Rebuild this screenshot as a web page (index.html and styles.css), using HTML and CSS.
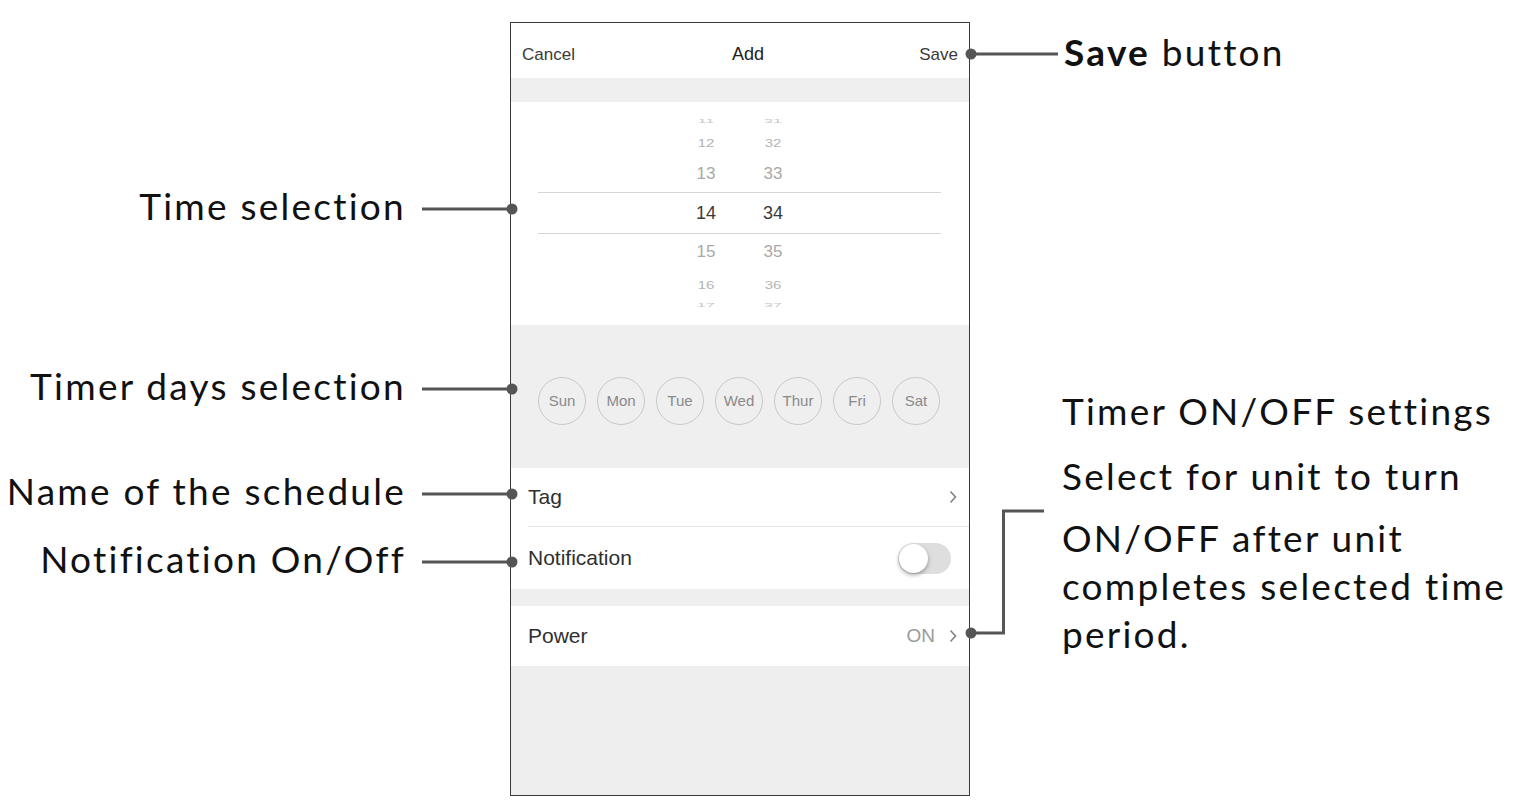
FILE: index.html
```html
<!DOCTYPE html>
<html lang="en">
<head>
  <meta charset="UTF-8" />
  <meta name="viewport" content="width=device-width, initial-scale=1" />
  <title>Timer schedule - Add</title>
  <link rel="stylesheet" href="styles.css">
</head>
<body>
  <div class="stage">
    <div class="phone">
      <div class="nav">
        <span>Cancel</span>
        <span class="nav-title">Add</span>
        <span>Save</span>
      </div>
      <div class="band"></div>

      <div class="picker">
        <div class="pick-row edge"><span>11</span><span>31</span></div>
        <div class="pick-row far"><span>12</span><span>32</span></div>
        <div class="pick-row near"><span>13</span><span>33</span></div>
        <div class="pick-row current"><span>14</span><span>34</span></div>
        <div class="pick-row near"><span>15</span><span>35</span></div>
        <div class="pick-row far"><span>16</span><span>36</span></div>
        <div class="pick-row edge"><span>17</span><span>37</span></div>
      </div>

      <div class="days">
        <span class="day">Sun</span>
        <span class="day">Mon</span>
        <span class="day">Tue</span>
        <span class="day">Wed</span>
        <span class="day">Thur</span>
        <span class="day">Fri</span>
        <span class="day">Sat</span>
      </div>

      <div class="group">
        <div class="row row-tag">
          <span>Tag</span>
          <svg class="chevron" viewBox="0 0 8 14"><polyline points="1.5,1.5 6.5,7 1.5,12.5" /></svg>
        </div>
        <div class="row row-notify">
          <span>Notification</span>
          <span class="toggle"></span>
        </div>
      </div>
      <div class="band band-small"></div>
      <div class="group">
        <div class="row row-power">
          <span>Power</span>
          <span class="row-value">ON
            <svg class="chevron" viewBox="0 0 8 14"><polyline points="1.5,1.5 6.5,7 1.5,12.5" /></svg>
          </span>
        </div>
      </div>
      <div class="fill"></div>
    </div>

    <!-- callout leaders -->
    <svg class="leaders" width="1524" height="811" viewBox="0 0 1524 811">
      <g fill="none" stroke="#555" stroke-width="3">
        <path d="M971 54 H1058" />
        <path d="M422 209 H512" />
        <path d="M422 389 H512" />
        <path d="M422 494 H512" />
        <path d="M422 562 H512" />
        <path d="M971 633 H1003.5 V511 H1044" />
      </g>
      <g fill="#555">
        <circle cx="971" cy="54" r="5.5" />
        <circle cx="512" cy="209" r="5.5" />
        <circle cx="512" cy="389" r="5.5" />
        <circle cx="512" cy="494" r="5.5" />
        <circle cx="512" cy="562" r="5.5" />
        <circle cx="971" cy="633" r="5.5" />
      </g>
    </svg>

    <p class="label label-left lbl-time">Time selection</p>
    <p class="label label-left lbl-days">Timer days selection</p>
    <p class="label label-left lbl-name">Name of the schedule</p>
    <p class="label label-left lbl-notify">Notification On/Off</p>

    <p class="label lbl-save"><b>Save</b> button</p>

    <div class="label note">
      <p>Timer ON/OFF settings</p>
      <p class="note-sub">Select for unit to turn</p>
      <p class="note-body">ON/OFF after unit<br>completes selected time<br>period.</p>
    </div>
  </div>
</body>
</html>
```

FILE: styles.css
```css
body {
  margin: 0;
  background: #fff;
  font-family: "Liberation Sans", Arial, sans-serif;
}

.stage {
  position: relative;
  width: 1524px;
  height: 811px;
  padding: 22px 0 0 510px;
  box-sizing: border-box;
  overflow: hidden;
}

/* phone screen */
.phone {
  width: 460px;
  height: 774px;
  border: 1px solid #3a3a3a;
  box-sizing: border-box;
  background: #eeeeee;
  display: flex;
  flex-direction: column;
  color: #333;
}
.nav {
  height: 55px;
  padding: 8px 11px 0 11px;
  box-sizing: border-box;
  background: #fff;
  display: flex;
  align-items: center;
  justify-content: space-between;
  font-size: 17px;
  color: #3a3a3a;
}
.nav-title {
  font-size: 18px;
  color: #222;
  margin-left: 2px;
}
.band {
  height: 24px;
  background: #efefef;
}
.band-small {
  height: 17px;
}

.picker {
  height: 223px;
  padding-top: 12px;
  box-sizing: border-box;
  background: #fff;
}
.pick-row {
  margin: 0 28px 0 27px;
  padding-left: 143px;
  display: flex;
  gap: 17px;
  align-items: center;
  font-size: 16px;
  color: #a9a9a9;
}
.pick-row span {
  width: 50px;
  text-align: center;
}
.pick-row.edge {
  height: 14px;
  color: #c8c8c8;
}
.pick-row.edge span {
  transform: scaleY(0.35);
}
.pick-row.far {
  height: 28px;
  font-size: 15px;
  color: #b4b4b4;
}
.pick-row.far span {
  transform: scaleY(0.78);
}
.pick-row.near {
  height: 36px;
  font-size: 17px;
}
.pick-row.current {
  height: 42px;
  box-sizing: border-box;
  border-top: 1.5px solid #d6d6d6;
  border-bottom: 1.5px solid #d6d6d6;
  font-size: 18px;
  color: #3a3a3a;
}

.days {
  height: 143px;
  padding: 8px 27px 0;
  box-sizing: border-box;
  display: flex;
  align-items: center;
  gap: 11px;
  background: #efefef;
}
.day {
  width: 48px;
  height: 48px;
  border: 1.5px solid #c9c9c9;
  border-radius: 50%;
  box-sizing: border-box;
  display: flex;
  align-items: center;
  justify-content: center;
  font-size: 15px;
  color: #8a8a8a;
}

.group {
  background: #fff;
}
.row {
  margin-left: 17px;
  padding-right: 12px;
  display: flex;
  align-items: center;
  justify-content: space-between;
  font-size: 21px;
  color: #2f2f2f;
}
.row-tag {
  height: 59px;
  box-sizing: border-box;
  border-bottom: 1px solid #e6e6e6;
}
.row-notify {
  height: 62px;
}
.row-power {
  height: 60px;
}
.row-value {
  display: flex;
  align-items: center;
  gap: 14px;
  font-size: 19px;
  color: #9a9a9a;
}
.chevron {
  width: 8px;
  height: 14px;
}
.chevron polyline {
  fill: none;
  stroke: #808080;
  stroke-width: 1.6;
}
.toggle {
  position: relative;
  width: 53px;
  height: 31px;
  margin-right: 6px;
  border-radius: 16px;
  background: #dedede;
}
.toggle::before {
  content: "";
  position: absolute;
  left: 1px;
  top: 1px;
  width: 29px;
  height: 29px;
  border-radius: 50%;
  background: #fff;
  box-shadow: 0 2px 4px rgba(0, 0, 0, 0.35);
}
.fill {
  flex: 1;
  background: #eeeeee;
}

/* callouts */
.leaders {
  position: absolute;
  top: 0;
  left: 0;
  pointer-events: none;
}
.label {
  position: absolute;
  margin: 0;
  font-family: Lato, "Open Sans", sans-serif;
  font-size: 37px;
  line-height: 48px;
  letter-spacing: 2.25px;
  color: #111;
  white-space: nowrap;
}
.label p {
  margin: 0;
}
.label-left {
  right: 1118px;
  text-align: right;
}
.lbl-time { top: 182px; }
.lbl-days { top: 362px; }
.lbl-name { top: 467px; }
.lbl-notify { top: 535px; }
.lbl-save {
  left: 1064px;
  top: 28px;
}
.lbl-save b {
  font-weight: 700;
}
.note {
  left: 1062px;
  top: 387px;
}
.note-sub {
  margin-top: 17px !important;
}
.note-body {
  margin-top: 14px !important;
}
```
